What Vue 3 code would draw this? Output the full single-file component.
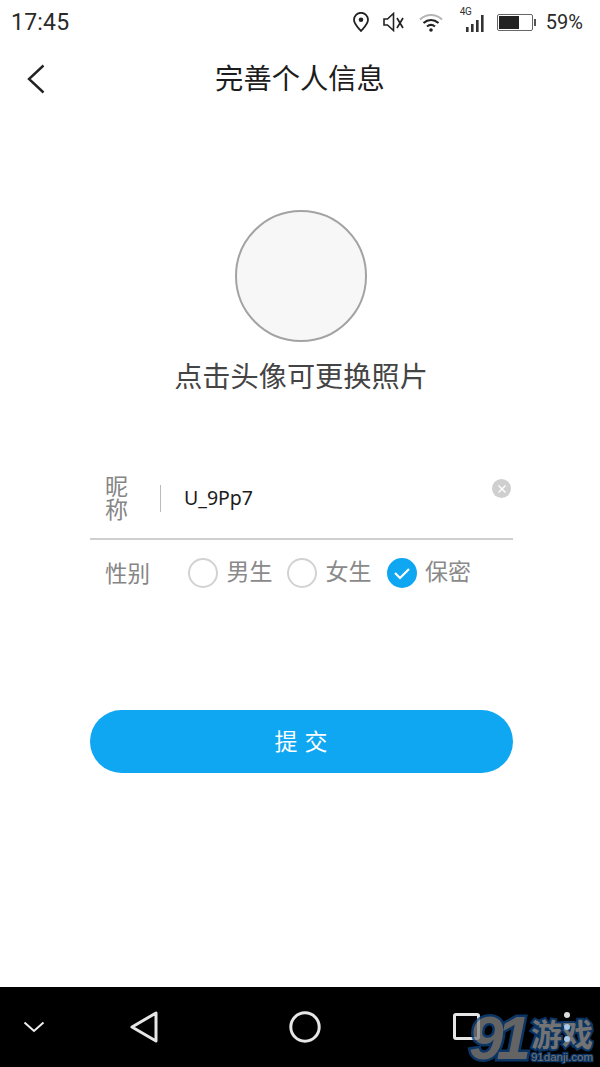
<script setup>
const options = [
  { label: '男生', checked: false },
  { label: '女生', checked: false },
  { label: '保密', checked: true },
]
</script>

<template>
  <div class="page">
    <header class="status">
      <span class="time">17:45</span>
      <div class="status-icons">
        <svg class="i-pin" width="16" height="20" viewBox="0 0 16 20" fill="none" stroke="#222" stroke-width="1.800">
          <path d="M8 19C4.500 15 1 12 1 7.800a7 7 0 0 1 14 0C15 12 11.500 15 8 19z" />
          <circle cx="8" cy="7.800" r="2.300" fill="#222" stroke="none" />
        </svg>
        <svg class="i-mute" width="21" height="20" viewBox="0 0 21 20" fill="none" stroke="#222" stroke-width="1.600">
          <path d="M1 7h3.500L10.500 1.500v17L4.500 13H1z" />
          <path d="M14 6l6 10M20 6l-6 10" stroke-width="1.700" />
        </svg>
        <svg class="i-wifi" width="24" height="19" viewBox="0 0 24 19" fill="none" stroke-width="2.200">
          <path d="M1 6.500C7.500 .5 16.500 .5 23 6.500" stroke="#b5b5b5" />
          <path d="M4.500 10c4.500-4 10.500-4 15 0" stroke="#222" />
          <path d="M8 13.500c2.500-2 5.500-2 8 0" stroke="#222" />
          <circle cx="12" cy="17" r="1.800" fill="#222" stroke="none" />
        </svg>
        <div class="signal">
          <span class="four-g">4G</span>
          <svg width="18" height="18" viewBox="0 0 18 18" fill="#333">
            <rect x="0" y="12" width="2.600" height="5" />
            <rect x="5" y="9" width="2.600" height="8" />
            <rect x="10" y="5" width="2.600" height="12" />
            <rect x="15" y="0" width="2.600" height="17" />
          </svg>
        </div>
        <div class="battery">
          <div class="battery-body"><div class="battery-fill"></div></div>
          <div class="battery-tip"></div>
        </div>
        <span class="percent">59%</span>
      </div>
    </header>

    <nav class="topbar">
      <svg class="back" width="20" height="30" viewBox="0 0 20 30" fill="none" stroke="#222" stroke-width="2.400">
        <path d="M17.500 1.500L3 15l14.500 13.500" />
      </svg>
      <h1 class="title">完善个人信息</h1>
    </nav>

    <main class="content">
      <div class="avatar"></div>
      <p class="hint">点击头像可更换照片</p>

      <form class="form" @submit.prevent>
        <div class="name-row">
          <span class="name-label">昵<br />称</span>
          <span class="divider"></span>
          <span class="name-value">U_9Pp7</span>
          <span class="clear">
            <svg width="10" height="10" viewBox="0 0 10 10" stroke="#fff" stroke-width="1.400">
              <path d="M1.500 1.500l7 7M8.500 1.500l-7 7" />
            </svg>
          </span>
        </div>
        <div class="gender-row">
          <span class="gender-label">性别</span>
          <div class="options">
            <div v-for="o in options" :key="o.label" class="option">
              <span class="radio" :class="{ checked: o.checked }">
                <svg v-if="o.checked" width="18" height="14" viewBox="0 0 18 14" fill="none" stroke="#fff" stroke-width="2.200">
                  <path d="M2 7l5 5 9-9" />
                </svg>
              </span>
              <span class="option-text">{{ o.label }}</span>
            </div>
          </div>
        </div>
        <button class="submit" type="submit"><span>提 交</span></button>
      </form>
    </main>

    <footer class="navbar">
      <svg class="nav-down" width="22" height="12" viewBox="0 0 22 12" fill="none" stroke="#eee" stroke-width="2">
        <path d="M1.500 1.500L11 10l9.500-8.500" />
      </svg>
      <svg class="nav-back" width="28" height="32" viewBox="0 0 28 32" fill="none" stroke="#e6e6e6" stroke-width="3" stroke-linejoin="round">
        <path d="M26 2v28L2 16z" />
      </svg>
      <svg class="nav-home" width="32" height="32" viewBox="0 0 32 32" fill="none" stroke="#e6e6e6" stroke-width="3">
        <circle cx="16" cy="16" r="14.200" />
      </svg>
      <svg class="nav-recent" width="27" height="27" viewBox="0 0 27 27" fill="none" stroke="#e6e6e6" stroke-width="3">
        <rect x="1.500" y="1.500" width="24" height="24" rx="1.500" />
      </svg>

      <div class="watermark">
        <span class="wm-num">91</span>
        <div class="wm-side">
          <span class="wm-cn">游戏</span>
          <span class="wm-url">91danji.com</span>
        </div>
      </div>
      <div class="nav-more"><i></i><i></i><i></i></div>
    </footer>
  </div>
</template>

<style>
html, body { margin: 0; padding: 0; }
</style>

<style scoped>
.page {
  width: 600px;
  height: 1067px;
  display: flex;
  flex-direction: column;
  overflow: hidden;
  background: #fff;
  font-family: "Noto Sans CJK SC", "Noto Sans", sans-serif;
}
.status {
  height: 44px;
  display: flex;
  align-items: center;
  justify-content: space-between;
  padding: 0 17px 0 11px;
  box-sizing: border-box;
  flex: none;
}
.time {
  font: 23px/1 Roboto, sans-serif;
  color: #2a2a2a;
  letter-spacing: .2px;
}
.status-icons { display: flex; align-items: center; }
.i-pin { margin-right: 14px; }
.i-mute { margin-right: 15px; }
.i-wifi { margin-right: 17px; }
.signal { position: relative; width: 24px; height: 22px; margin-right: 13px; display: flex; justify-content: flex-end; align-items: flex-end; }
.four-g { position: absolute; left: 0; top: -4px; font: 10px/1 Roboto, sans-serif; color: #333; letter-spacing: -.6px; }
.battery { display: flex; align-items: center; margin-right: 10px; }
.battery-body {
  width: 32px;
  height: 13px;
  border: 1px solid #666;
  border-radius: 2px;
  padding: 1px;
  box-sizing: content-box;
}
.battery-fill { width: 20px; height: 100%; background: #222; }
.battery-tip { width: 2px; height: 7px; background: #555; margin-left: 1px; }
.percent { font: 20px/1 Roboto, sans-serif; color: #2a2a2a; }

.topbar {
  height: 68px;
  flex: none;
  position: relative;
  display: flex;
  align-items: center;
  justify-content: center;
}
.back { position: absolute; left: 26px; top: 20px; }
.title {
  margin: 0;
  font-size: 28.300px;
  font-weight: 400;
  line-height: 1;
  color: #1c1c1c;
  position: relative;
  top: -1px;
}
.content {
  flex: 1;
  display: flex;
  flex-direction: column;
  align-items: center;
  padding-top: 98px;
  padding-left: 2px;
}
.avatar {
  width: 132px;
  height: 132px;
  box-sizing: border-box;
  border-radius: 50%;
  border: 2px solid #a3a3a3;
  background: #f7f7f7;
}
.hint {
  margin: 19px 0 0;
  font-size: 28.200px;
  line-height: 28px;
  color: #444;
  white-space: nowrap;
}
.form {
  width: 423px;
  margin: 74px 0 0 1px;
  display: flex;
  flex-direction: column;
}
.name-row {
  height: 77px;
  border-bottom: 2px solid #cfcfcf;
  position: relative;
  display: flex;
  align-items: center;
  padding-left: 15px;
  padding-bottom: 4px;
  box-sizing: border-box;
}
.name-label { font-size: 23px; line-height: 23px; color: #858585; width: 55px; position: relative; top: -2px; }
.divider { width: 1px; height: 27px; background: #bbb; }
.name-value { margin-left: 23px; font: 19.500px/1 "Noto Sans", sans-serif; color: #1c1c1c; position: relative; top: -1px; }
.clear {
  position: absolute;
  right: 2px;
  top: 16px;
  width: 19px;
  height: 19px;
  border-radius: 50%;
  background: #cfcfcf;
  display: flex;
  align-items: center;
  justify-content: center;
}
.gender-row {
  display: flex;
  align-items: center;
  padding: 18px 0 0 15px;
}
.gender-label { font-size: 22.500px; line-height: 30px; color: #858585; width: 83px; position: relative; top: -1px; }
.options { display: flex; }
.option { display: flex; align-items: center; width: 99px; }
.option:last-child { margin-left: .5px; }
.radio {
  width: 30px;
  height: 30px;
  box-sizing: border-box;
  border-radius: 50%;
  border: 2px solid #d2d2d2;
  display: flex;
  align-items: center;
  justify-content: center;
}
.radio.checked { background: #0fa6f2; border-color: #0fa6f2; }
.option-text { margin-left: 8.500px; font-size: 23px; line-height: 28px; color: #8a8a8a; position: relative; top: -3px; }
.submit {
  margin-top: 122px;
  height: 63px;
  width: 423px;
  border: none;
  border-radius: 32px;
  background: #0fa6f2;
  color: #fff;
  font-family: inherit;
  font-size: 23px;
  letter-spacing: 1px;
  padding: 0 0 3px;
}
.navbar {
  height: 80px;
  flex: none;
  background: #000;
  position: relative;
  display: flex;
  align-items: center;
  padding-bottom: 1px;
  box-sizing: border-box;
}
.nav-down { margin-left: 23px; }
.nav-back { margin-left: 85px; }
.nav-home { margin-left: 131px; }
.nav-recent { margin-left: 132px; }
.nav-more {
  position: absolute;
  left: 564px;
  top: 25px;
  display: flex;
  flex-direction: column;
  gap: 6px;
}
.nav-more i { width: 6px; height: 6px; border-radius: 50%; background: #ddd; display: block; }
.nav-more i:nth-child(n+2) { background: #a9c8ea; }
.watermark {
  position: absolute;
  left: 469px;
  top: 25px;
  display: flex;
  align-items: flex-start;
  opacity: .78;
}
.wm-num {
  font: italic 700 62px/52px "Liberation Sans", sans-serif;
  letter-spacing: -7px;
  color: #808080;
  -webkit-text-stroke: 5px #0e4482;
  paint-order: stroke fill;
}
.wm-side { display: flex; flex-direction: column; margin-left: 7px; margin-top: 6px; }
.wm-cn {
  font-size: 31px;
  line-height: 30px;
  font-weight: 700;
  color: #949494;
  -webkit-text-stroke: 4px #0e4482;
  paint-order: stroke fill;
}
.wm-url {
  font: 11.500px/14px "Liberation Sans", sans-serif;
  color: #949494;
  margin-top: 2px;
  -webkit-text-stroke: 2.500px #0e4482;
  paint-order: stroke fill;
}
</style>
